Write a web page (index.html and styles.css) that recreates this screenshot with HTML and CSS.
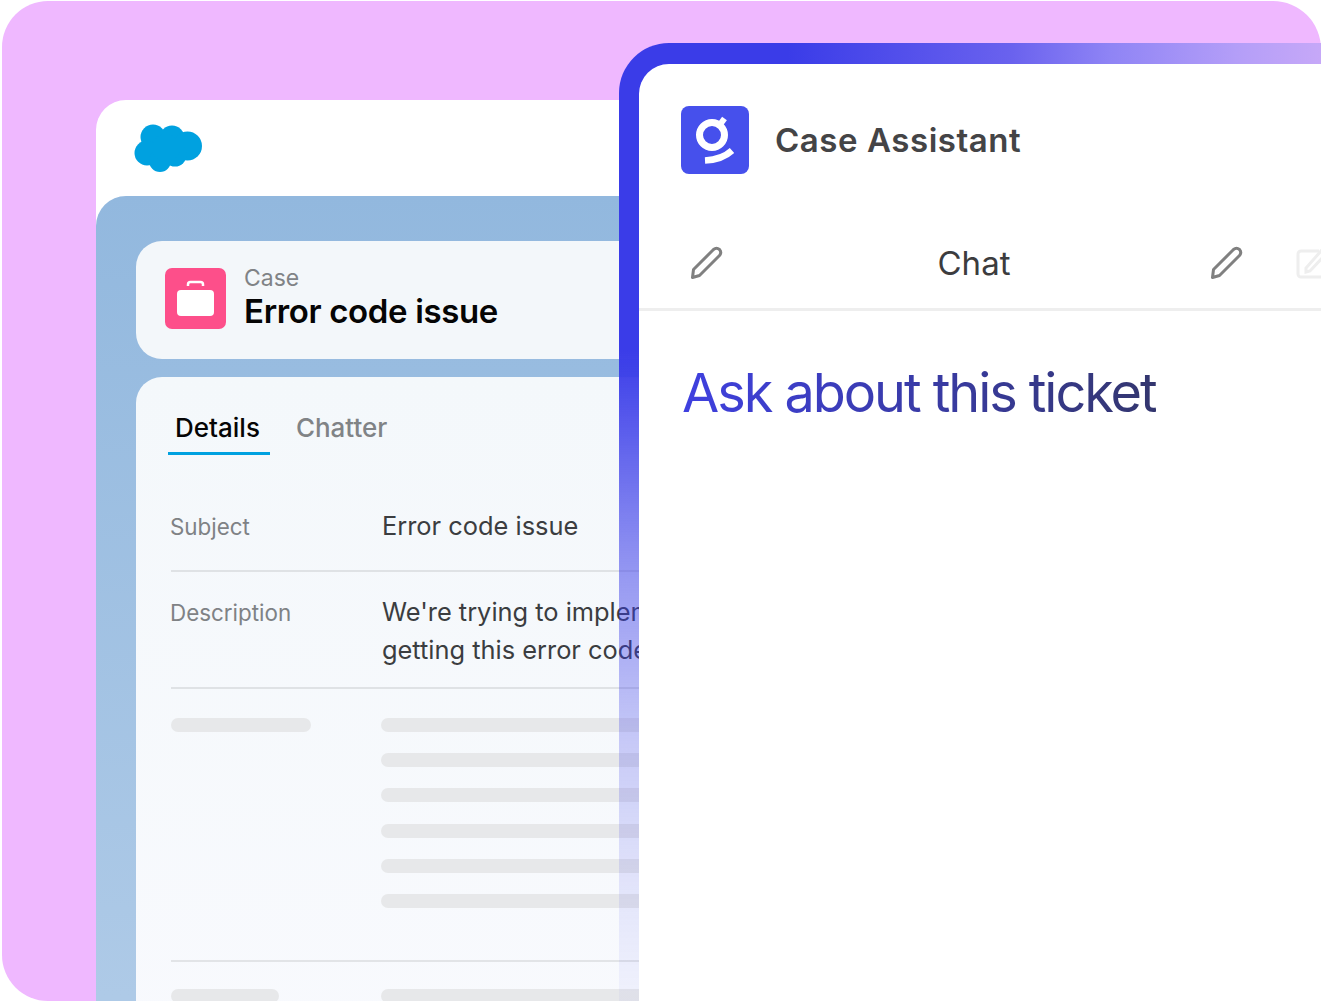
FILE: index.html
```html
<!DOCTYPE html>
<html lang="en">
<head>
<meta charset="utf-8">
<title>Case Assistant</title>
<link rel="stylesheet" href="styles.css">
</head>
<body>
<div class="stage">
  <div class="pink">
    <section class="sf-card">
      <header class="sf-head">
        <svg class="sf-logo" width="68" height="48" viewBox="134 124 68 48">
          <g fill="#00a1e0">
            <circle cx="153" cy="137" r="12.5"/><circle cx="172" cy="138" r="12.5"/><circle cx="187.500" cy="146" r="14.500"/>
            <circle cx="147" cy="153" r="12.500"/><circle cx="160" cy="161" r="11"/><circle cx="175" cy="155" r="11.500"/><circle cx="166" cy="148" r="14"/>
          </g>
        </svg>
      </header>
      <div class="sf-body">
        <div class="case-card">
          <div class="case-icon">
            <svg width="61" height="61" viewBox="0 0 61 61">
              <path d="M23 18v-1.500a2.500 2.500 0 0 1 2.500-2.500h10a2.500 2.500 0 0 1 2.500 2.500V18" fill="none" stroke="#fff" stroke-width="2.500"/>
              <rect x="12" y="22" width="37" height="26" rx="4" fill="#fff"/>
            </svg>
          </div>
          <div class="case-text">
            <div class="case-label">Case</div>
            <div class="case-title">Error code issue</div>
          </div>
        </div>
        <div class="detail-card">
          <nav class="tabs">
            <span class="tab tab-on">Details</span>
            <span class="tab">Chatter</span>
          </nav>
          <div class="row row-subject">
            <div class="key">Subject</div>
            <div class="val">Error code issue</div>
          </div>
          <div class="row row-desc">
            <div class="key">Description</div>
            <div class="val">We're trying to implement the new feature but keep<br>getting this error code when we deploy it</div>
          </div>
          <div class="row row-skel">
            <div><div class="bar bar-key"></div></div>
            <div class="bars">
              <div class="bar"></div><div class="bar"></div><div class="bar"></div>
              <div class="bar"></div><div class="bar"></div><div class="bar"></div>
            </div>
          </div>
          <div class="row row-last">
            <div><div class="bar bar-short"></div></div>
            <div><div class="bar"></div></div>
          </div>
        </div>
      </div>
    </section>
  </div>

  <aside class="assistant">
    <div class="assistant-inner">
      <header class="as-head">
        <svg class="as-logo" width="68" height="68" viewBox="0 0 68 68">
          <rect width="68" height="68" rx="8" fill="#4650ec"/>
          <circle cx="31" cy="29" r="12.500" fill="none" stroke="#fff" stroke-width="7"/>
          <path d="M39 18.500L43.500 12.500" stroke="#fff" stroke-width="6" fill="none"/>
          <path d="M24 54.500C34 54 44 51 51 44.500" stroke="#fff" stroke-width="6.500" fill="none"/>
        </svg>
        <h2 class="as-title">Case Assistant</h2>
      </header>
      <div class="as-tabs">
        <svg class="pen" width="34" height="34" viewBox="0 0 34 34"><path d="M3.500 23.500L23.500 3.500Q26.500 1 29.500 3.500Q32 6.500 29.500 9.500L9.500 29.500L2.500 31.500Z" fill="none" stroke="#808080" stroke-width="3" stroke-linejoin="round"/></svg>
        <span class="chat">Chat</span>
        <svg class="pen" width="34" height="34" viewBox="0 0 34 34"><path d="M3.500 23.500L23.500 3.500Q26.500 1 29.500 3.500Q32 6.500 29.500 9.500L9.500 29.500L2.500 31.500Z" fill="none" stroke="#808080" stroke-width="3" stroke-linejoin="round"/></svg>
        <svg class="compose" width="34" height="34" viewBox="0 0 34 34"><path d="M24 5H6a3 3 0 0 0-3 3v20a3 3 0 0 0 3 3h24" fill="none" stroke="#eeeeee" stroke-width="3"/><path d="M11 22L11 26L15 25L30 9L26 5Z" fill="none" stroke="#eeeeee" stroke-width="3"/></svg>
      </div>
      <h1 class="ask">Ask about this ticket</h1>
    </div>
  </aside>
</div>
</body>
</html>
```
FILE: styles.css
```css
* { box-sizing: border-box; }
html, body { margin: 0; padding: 0; background: #fff; }
body { font-family: Inter, "Liberation Sans", sans-serif; }
.stage { position: relative; width: 1321px; height: 1001px; overflow: hidden; background: #fff; }

.pink {
  margin: 1px 0 0 2px;
  height: 1000px;
  padding: 99px 0 0 94px;
  background: #efb8ff;
  border-radius: 46px 48px 0 46px;
  overflow: hidden;
}
.sf-card {
  width: 900px;
  height: 1100px;
  background: #fff;
  border-radius: 30px 0 0 0;
  overflow: hidden;
}
.sf-head { height: 96px; padding: 24px 0 0 38px; }
.sf-logo { display: block; }
.sf-body {
  height: 1000px;
  padding: 45px 0 0 40px;
  border-radius: 30px 0 0 0;
  background: linear-gradient(180deg, #92b8de 0%, #aecae7 80%);
}
.case-card {
  display: flex;
  align-items: center;
  height: 118px;
  padding: 0 0 3px 29px;
  background: #f3f7fa;
  border-radius: 26px 0 0 26px;
}
.case-icon { width: 61px; height: 61px; background: #fd4f8a; border-radius: 7px; flex: none; }
.case-icon svg { display: block; }
.case-text { margin: 0 0 4px 18px; }
.case-label { font-size: 23px; line-height: 28px; color: #808386; }
.case-title { font-size: 33px; line-height: 38px; font-weight: 600; color: #050505; letter-spacing: -0.35px; }

.detail-card {
  margin-top: 18px;
  height: 800px;
  padding: 18px 0 0 35px;
  background: linear-gradient(180deg, #f4f8fb 0%, #f9fafe 100%);
  border-radius: 26px 0 0 0;
}
.tabs { display: flex; gap: 19px; margin-left: -3px; }
.tab {
  height: 60px;
  padding: 15px 8px 0 7px;
  font-size: 26px;
  line-height: 36px;
  font-weight: 500;
  color: #808386;
}
.tab-on { color: #050505; padding: 15px 10px 0 7px; border-bottom: 3px solid #00a1e0; }

.row { display: grid; grid-template-columns: 212px 1fr; border-bottom: 2px solid #dfe2e5; }
.key { font-size: 22.400px; line-height: 38px; color: #7f8285; margin-left: -1px; }
.val { font-size: 25.400px; line-height: 38px; color: #3b3d40; white-space: nowrap; margin: -1px 0 0 -1px; }
.row-subject { height: 117px; padding-top: 53px; }
.row-desc { height: 117px; padding-top: 22px; }
.row-skel { height: 273px; padding-top: 29px; border-bottom-color: #e2e4e7; }
.bars { display: flex; flex-direction: column; gap: 21.200px; }
.bar { height: 14px; border-radius: 7px; background: #e7e8ea; margin-left: -2px; }
.bar-key { width: 140px; margin-left: 0; }
.row-last { padding-top: 27px; border-bottom: 0; }
.bar-short { width: 108px; margin-left: 0; }

.assistant {
  position: absolute;
  left: 619px;
  top: 43px;
  width: 702px;
  height: 958px;
  padding: 21px 0 0 20px;
  border-radius: 50px 0 0 0;
  background-repeat: no-repeat;
  background-image:
    linear-gradient(90deg, #3a3ce8 0%, #3a3ce8 24%, #6a62ee 56%, #8f84f5 70%, #b49ef8 88%, #c6a8f8 100%),
    linear-gradient(#3a3ce8, #3a3ce8),
    linear-gradient(180deg, rgba(58,60,232,1) 0%, rgba(58,60,232,1) 32%, rgba(58,60,232,.5) 56%, rgba(58,60,232,.25) 73%, rgba(58,60,232,.1) 89%, rgba(58,60,232,.04) 100%);
  background-size: 100% 21px, 60px 60px, 20px 100%;
  background-position: 0 0, 0 0, 0 0;
}
.assistant-inner {
  height: 100%;
  background: #fff;
  border-radius: 30px 0 0 0;
  overflow: hidden;
}
.as-head { display: flex; align-items: center; gap: 26px; padding: 42px 0 0 42px; }
.as-logo { display: block; flex: none; }
.as-title { margin: 0; font-size: 33px; line-height: 40px; font-weight: 600; color: #444446; letter-spacing: 0.55px; }
.as-tabs {
  display: flex;
  align-items: center;
  height: 64px;
  margin-top: 57px;
  padding: 0 0 0 51px;
  box-sizing: content-box;
  padding-bottom: 13px;
  border-bottom: 3px solid #eeeeee;
  width: 660px;
}
.pen { flex: none; }
.chat { width: 486px; padding-left: 15px; padding-right: 1px; text-align: center; font-size: 33px; line-height: 40px; color: #3c3c3e; }
.compose { flex: none; margin-left: 51px; }
.ask {
  margin: 52px 0 0 43px;
  width: 474px;
  font-size: 54px;
  line-height: 60px;
  font-weight: 400;
  letter-spacing: -2.050px;
  white-space: nowrap;
  color: transparent;
  background: linear-gradient(90deg, #3f40e0 0%, #33366e 100%);
  -webkit-background-clip: text;
  background-clip: text;
}
```
